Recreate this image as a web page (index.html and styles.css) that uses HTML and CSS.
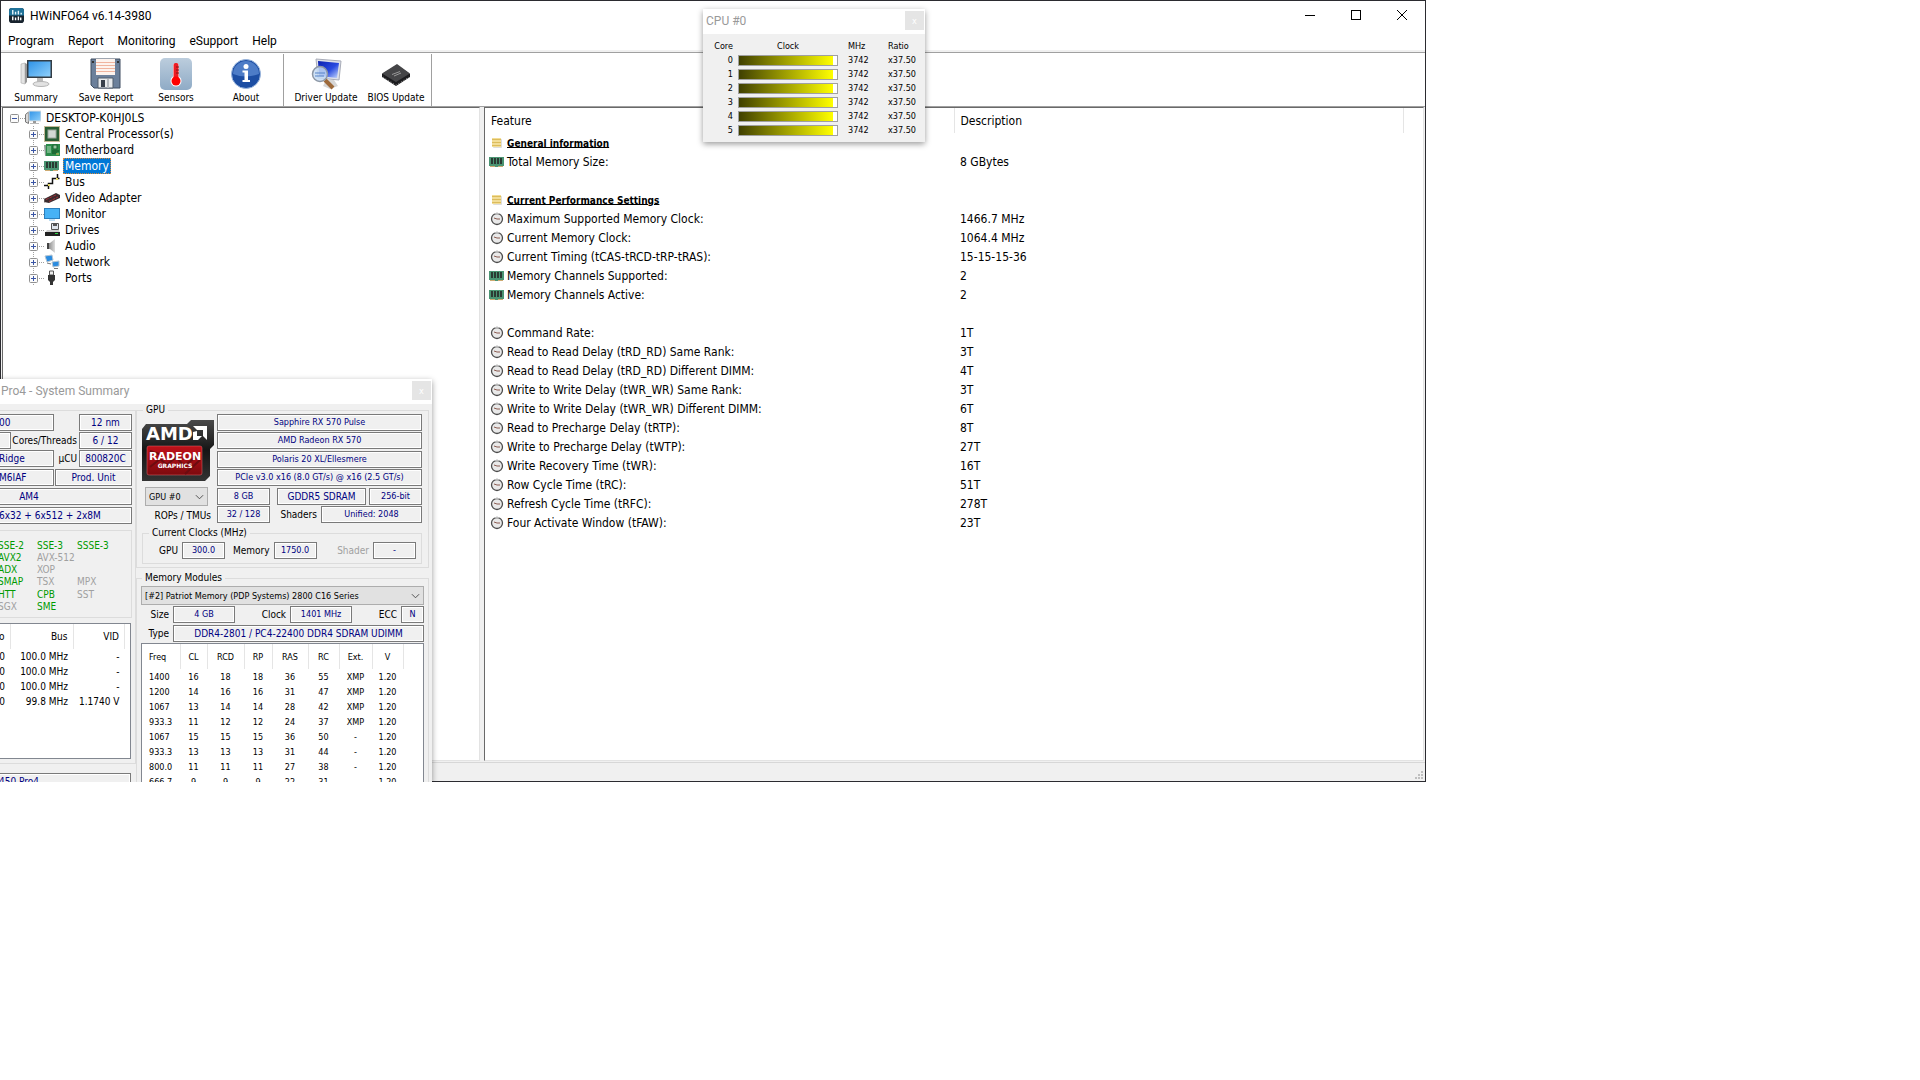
FILE: index.html
```html
<!DOCTYPE html>
<html lang="en">
<head>
    <meta charset="UTF-8">
    <meta name="viewport" content="width=device-width, initial-scale=1.0">
    <title>HWiNFO64 v6.14-3980</title>
    <link rel="stylesheet" href="styles.css">
</head>
<body>
    <svg width="0" height="0" class="sprites" aria-hidden="true">
        <defs>
            <linearGradient id="blue" x1="0" y1="0" x2="1" y2="1">
                <stop offset="0" stop-color="#2f93e8"/>
                <stop offset="1" stop-color="#8fd0fb"/>
            </linearGradient>
            <linearGradient id="steel" x1="0" y1="0" x2="0" y2="1">
                <stop offset="0" stop-color="#bccddd"/>
                <stop offset="1" stop-color="#8fabc6"/>
            </linearGradient>
            <linearGradient id="royal" x1="0" y1="0" x2="1" y2="1">
                <stop offset="0" stop-color="#0a1fae"/>
                <stop offset=".55" stop-color="#2a4be0"/>
                <stop offset="1" stop-color="#c9dcff"/>
            </linearGradient>
            <linearGradient id="grey" x1="0" y1="0" x2="1" y2="0">
                <stop offset="0" stop-color="#777"/>
                <stop offset="1" stop-color="#ddd"/>
            </linearGradient>
            <linearGradient id="red" x1="0" y1="0" x2="0" y2="1">
                <stop offset="0" stop-color="#c01119"/>
                <stop offset="1" stop-color="#7d0a0e"/>
            </linearGradient>
            <linearGradient id="dark" x1="0" y1="0" x2="0" y2="1">
                <stop offset="0" stop-color="#4a4a4a"/>
                <stop offset=".5" stop-color="#151515"/>
                <stop offset="1" stop-color="#333"/>
            </linearGradient>
        </defs>
        <symbol id="i-expand" viewBox="0 0 9 9">
            <rect x=".5" y=".5" width="8" height="8" rx="1" fill="#fbfbfb" stroke="#919191"/>
            <path d="M2 4.5h5M4.5 2v5" stroke="#3a55a5"/>
        </symbol>
        <symbol id="i-collapse" viewBox="0 0 9 9">
            <rect x=".5" y=".5" width="8" height="8" rx="1" fill="#fbfbfb" stroke="#919191"/>
            <path d="M2 4.5h5" stroke="#3a55a5"/>
        </symbol>
        <symbol id="i-pc" viewBox="0 0 16 16">
            <path d="M.5 4.5l3-2.5v11.5l-3-1.5z" fill="#d8d8d8" stroke="#777"/>
            <rect x="4" y="1" width="12" height="10" fill="url(#blue)" stroke="#ddd"/>
            <rect x="8" y="11" width="3" height="2" fill="#999"/>
            <rect x="5" y="13" width="9" height="1" fill="#bbb"/>
        </symbol>
        <symbol id="i-cpu" viewBox="0 0 16 16">
            <rect x=".5" y=".5" width="15" height="15" fill="#fff" stroke="#8b7430" stroke-dasharray="1 1"/>
            <rect x="1" y="1" width="14" height="14" fill="#285c33"/>
            <rect x="4" y="4" width="8" height="8" fill="#d3d8d3" stroke="#9da79d"/>
        </symbol>
        <symbol id="i-board" viewBox="0 0 16 16">
            <path d="M0 3h3v11H1z" fill="#8b9a92"/>
            <rect x="2" y="2" width="14" height="12" fill="#2c8c4b"/>
            <path d="M4 4v7M6 4v7" stroke="#b6dcc0"/>
            <rect x="9" y="3" width="4" height="4" fill="#9bc8a4" stroke="#17612f"/>
            <path d="M8 9h7M8 11h5" stroke="#10491f"/>
            <path d="M12 12h3" stroke="#e2c25c"/>
        </symbol>
        <symbol id="i-ram" viewBox="0 0 16 16">
            <path d="M0 3h15v9H0z" fill="#4a9472"/>
            <path d="M2 4h2v6H2zM5 4h2v6H5zM8 4h2v6H8zM11 4h2v6h-2z" fill="#2b3a33"/>
            <path d="M1 12.5h5M9 12.5h5" stroke="#cdaa72"/>
            <path d="M6 12h3v1H6z" fill="#4a9472"/>
        </symbol>
        <symbol id="i-bus" viewBox="0 0 16 16">
            <path d="M0 11.5h5M4.500 9v6M4.500 10V9.500h4v-5h7M13.500 0v5" fill="none" stroke="#111" stroke-width="1.500"/>
            <path d="M4 10h2v2H4zM12 4h2v2h-2z" fill="#e9dd6a"/>
        </symbol>
        <symbol id="i-gpu" viewBox="0 0 16 16">
            <path d="M0 9l12-6 4 2v3L5 13 0 12z" fill="#3a2c2f"/>
            <path d="M2 9.500l11-5M5 11.500l9-4.500" stroke="#a33038" stroke-dasharray="3 1"/>
            <path d="M0 8v5" stroke="#888"/>
        </symbol>
        <symbol id="i-monitor" viewBox="0 0 16 16">
            <rect x=".5" y="2.5" width="15" height="10" fill="#47b2f5" stroke="#2b7fbd"/>
            <path d="M5 14h6" stroke="#7ebce6"/>
        </symbol>
        <symbol id="i-drive" viewBox="0 0 16 16">
            <path d="M7.500 1.500h7v6h-7z" fill="#dfe5ec" stroke="#555"/>
            <path d="M9 2h4v2H9z" fill="#555"/>
            <path d="M3 8h12l1 3v3H1v-3z" fill="#d0d0d0"/>
            <rect x="1" y="10" width="15" height="4" fill="#222"/>
            <rect x="11" y="11" width="3" height="1" fill="#31d545"/>
        </symbol>
        <symbol id="i-audio" viewBox="0 0 16 16">
            <path d="M3 5h3l5-4v14l-5-4H3z" fill="url(#grey)"/>
            <path d="M4 5v6" stroke="#444" stroke-width="2"/>
        </symbol>
        <symbol id="i-net" viewBox="0 0 16 16">
            <path d="M1 2l7-1 1 5-6 2z" fill="#2b8ce0" stroke="#b6c5d1"/>
            <path d="M8 8l7-1v5l-6 1z" fill="#2b8ce0" stroke="#b6c5d1"/>
            <path d="M3 9l4 1M10 14.500h4" stroke="#777"/>
        </symbol>
        <symbol id="i-port" viewBox="0 0 16 16">
            <path d="M5.500 1h4v4h-4z" fill="#eee" stroke="#555"/>
            <path d="M4 5h7v5l-2 2v3H6v-3l-2-2z" fill="#333"/>
        </symbol>
        <symbol id="i-note" viewBox="0 0 16 16">
            <rect x="4" y="4" width="9" height="9" rx="1" fill="#ddd"/>
            <rect x="3" y="3" width="9" height="9" fill="#f2dd97"/>
            <path d="M3 4.500h9M3 7.500h9M3 10.500h9" stroke="#dcbc5c"/>
        </symbol>
        <symbol id="i-clock" viewBox="0 0 16 16">
            <circle cx="8" cy="8" r="5.500" fill="#e9e9e9" stroke="#4d4d4d" stroke-width="1.300"/>
            <path d="M5 7l3 1h3" fill="none" stroke="#8a5b50"/>
            <path d="M5 2.500h6" stroke="#bbb"/>
        </symbol>
        <symbol id="i-chevron" viewBox="0 0 10 6">
            <path d="M1 1l4 4 4-4" fill="none" stroke="#444"/>
        </symbol>
    </svg>

    <div class="screen">
        <main class="app">
            <header class="titlebar">
                <svg class="app-icon" viewBox="0 0 16 16">
                    <rect width="16" height="16" rx="3" fill="#17232e"/>
                    <path d="M0 8V3a3 3 0 013-3h10a3 3 0 013 3v5z" fill="#1f7299"/>
                    <path d="M4 2v5M7 4v3M10 3v4M13 5v2" stroke="#e6f4fb" stroke-width="1.500"/>
                    <path d="M4 9v4M7 10v3M10 9v4M12.500 10v3" stroke="#fff" stroke-width="1.500"/>
                </svg>
                <h1>HWiNFO64 v6.14-3980</h1>
                <div class="window-buttons">
                    <button aria-label="Minimize"><svg viewBox="0 0 10 10"><path d="M0 5.500h10" stroke="#000"/></svg></button>
                    <button aria-label="Maximize"><svg viewBox="0 0 10 10"><rect x=".5" y=".5" width="9" height="9" fill="none" stroke="#000"/></svg></button>
                    <button aria-label="Close"><svg viewBox="0 0 10 10"><path d="M0 0l10 10M10 0L0 10" stroke="#000"/></svg></button>
                </div>
            </header>

            <nav class="menu">
                <button>Program</button>
                <button>Report</button>
                <button>Monitoring</button>
                <button>eSupport</button>
                <button>Help</button>
            </nav>

            <div class="toolbar">
                <div class="tool-group">
                    <button>
                        <svg viewBox="0 0 32 32">
                            <path d="M1 6l4-1v21l-4-1z" fill="#e4e4e4" stroke="#aaa" stroke-width=".6"/>
                            <path d="M5 5l2 1v18l-2 2z" fill="#999"/>
                            <rect x="7" y="2" width="25" height="18" fill="#333c44"/>
                            <rect x="8.500" y="3.500" width="22" height="15" fill="url(#blue)"/>
                            <path d="M17 20h6v5h-6z" fill="#bbb"/>
                            <ellipse cx="21" cy="26" rx="8" ry="2.500" fill="#e2e2e2" stroke="#b5b5b5"/>
                        </svg>
                        Summary
                    </button>
                    <button>
                        <svg viewBox="0 0 32 32">
                            <path d="M1 1h29v29H4l-3-3z" fill="#6c809b" stroke="#3f4d60"/>
                            <rect x="6" y="1" width="19" height="16" fill="#fdf3ee"/>
                            <path d="M6 4.500h19M6 7.500h19M6 10.500h19M6 13.500h19" stroke="#f0b49f"/>
                            <path d="M8 20h15v10H8z" fill="#e8eaec" stroke="#515d6c"/>
                            <path d="M11 22h4v7h-4z" fill="#38404b"/>
                            <path d="M17 21h2v9h-2z" fill="#b5bac0"/>
                            <path d="M2 3h2v2H2zM27 3h2v2h-2z" fill="#333"/>
                        </svg>
                        Save Report
                    </button>
                    <button>
                        <svg viewBox="0 0 32 32">
                            <rect width="32" height="32" rx="5" fill="url(#steel)"/>
                            <rect x="13" y="5" width="6" height="18" rx="3" fill="#fff"/>
                            <circle cx="16" cy="23" r="5.500" fill="#fff"/>
                            <rect x="13.500" y="5" width="5" height="17" rx="2" fill="#ec1c24"/>
                            <circle cx="16" cy="23" r="4.500" fill="#f00"/>
                            <path d="M16 9h3M16 12h3M16 15h3" stroke="#7e1a1a"/>
                        </svg>
                        Sensors
                    </button>
                    <button>
                        <svg viewBox="0 0 32 32">
                            <circle cx="16" cy="16" r="14.500" fill="#1d4ea3" stroke="#9ab6dd"/>
                            <path d="M3 16a13 13 0 0126 0q-13 5-26 0z" fill="#4d7cc7"/>
                            <circle cx="16" cy="8.500" r="2.500" fill="#fff"/>
                            <path d="M12.500 12.500H18V22h2v2h-7.500v-2h2v-7.500h-2z" fill="#fff"/>
                        </svg>
                        About
                    </button>
                </div>
                <div class="tool-group">
                    <button>
                        <svg viewBox="0 0 32 32">
                            <path d="M6 1l25 2-2 19-21-2z" fill="#dfe2ea" stroke="#a8acb8"/>
                            <path d="M8 3l21 2-2 15-18-2z" fill="url(#royal)"/>
                            <path d="M16 22h8l4 6-8 3-7-3z" fill="#d6d6d6"/>
                            <path d="M15 22l8 8" stroke="#9d6a3b" stroke-width="4"/>
                            <circle cx="10" cy="16" r="7.500" fill="#c5dcf5" fill-opacity=".85" stroke="#8d97a5" stroke-width="1.500"/>
                            <path d="M5 15h10M5 18h9" stroke="#5783c8"/>
                        </svg>
                        Driver Update
                    </button>
                    <button>
                        <svg viewBox="0 0 32 32">
                            <path d="M2 16l15-9 13 9v3l-14 9-14-9z" fill="#1c1c1e"/>
                            <path d="M2 15.500L17 6l13 9.500-14 8.500z" fill="#454547"/>
                            <path d="M3 19l13 8 13-8" fill="none" stroke="#8a8a8a" stroke-dasharray="1 2"/>
                            <path d="M12 16.500l8-3M14 18l7-3" stroke="#999"/>
                        </svg>
                        BIOS Update
                    </button>
                </div>
            </div>

            <div class="panes">
                <section class="tree">
                    <ul>
                        <li class="root"><svg class="box"><use href="#i-collapse"/></svg><svg class="icon"><use href="#i-pc"/></svg><span>DESKTOP-K0HJ0LS</span></li>
                        <li><svg class="box"><use href="#i-expand"/></svg><svg class="icon"><use href="#i-cpu"/></svg><span>Central Processor(s)</span></li>
                        <li><svg class="box"><use href="#i-expand"/></svg><svg class="icon"><use href="#i-board"/></svg><span>Motherboard</span></li>
                        <li><svg class="box"><use href="#i-expand"/></svg><svg class="icon"><use href="#i-ram"/></svg><span class="selected">Memory</span></li>
                        <li><svg class="box"><use href="#i-expand"/></svg><svg class="icon"><use href="#i-bus"/></svg><span>Bus</span></li>
                        <li><svg class="box"><use href="#i-expand"/></svg><svg class="icon"><use href="#i-gpu"/></svg><span>Video Adapter</span></li>
                        <li><svg class="box"><use href="#i-expand"/></svg><svg class="icon"><use href="#i-monitor"/></svg><span>Monitor</span></li>
                        <li><svg class="box"><use href="#i-expand"/></svg><svg class="icon"><use href="#i-drive"/></svg><span>Drives</span></li>
                        <li><svg class="box"><use href="#i-expand"/></svg><svg class="icon"><use href="#i-audio"/></svg><span>Audio</span></li>
                        <li><svg class="box"><use href="#i-expand"/></svg><svg class="icon"><use href="#i-net"/></svg><span>Network</span></li>
                        <li><svg class="box"><use href="#i-expand"/></svg><svg class="icon"><use href="#i-port"/></svg><span>Ports</span></li>
                    </ul>
                </section>

                <section class="details">
                    <table>
                        <colgroup><col class="col-feature"><col class="col-desc"><col></colgroup>
                        <thead>
                            <tr><th>Feature</th><th>Description</th><th></th></tr>
                        </thead>
                        <tbody>
                            <tr class="section"><td><svg class="icon"><use href="#i-note"/></svg><b>General information</b></td><td></td></tr>
                            <tr><td><svg class="icon"><use href="#i-ram"/></svg>Total Memory Size:</td><td>8 GBytes</td></tr>
                            <tr><td></td><td></td></tr>
                            <tr class="section"><td><svg class="icon"><use href="#i-note"/></svg><b>Current Performance Settings</b></td><td></td></tr>
                            <tr><td><svg class="icon"><use href="#i-clock"/></svg>Maximum Supported Memory Clock:</td><td>1466.7 MHz</td></tr>
                            <tr><td><svg class="icon"><use href="#i-clock"/></svg>Current Memory Clock:</td><td>1064.4 MHz</td></tr>
                            <tr><td><svg class="icon"><use href="#i-clock"/></svg>Current Timing (tCAS-tRCD-tRP-tRAS):</td><td>15-15-15-36</td></tr>
                            <tr><td><svg class="icon"><use href="#i-ram"/></svg>Memory Channels Supported:</td><td>2</td></tr>
                            <tr><td><svg class="icon"><use href="#i-ram"/></svg>Memory Channels Active:</td><td>2</td></tr>
                            <tr><td></td><td></td></tr>
                            <tr><td><svg class="icon"><use href="#i-clock"/></svg>Command Rate:</td><td>1T</td></tr>
                            <tr><td><svg class="icon"><use href="#i-clock"/></svg>Read to Read Delay (tRD_RD) Same Rank:</td><td>3T</td></tr>
                            <tr><td><svg class="icon"><use href="#i-clock"/></svg>Read to Read Delay (tRD_RD) Different DIMM:</td><td>4T</td></tr>
                            <tr><td><svg class="icon"><use href="#i-clock"/></svg>Write to Write Delay (tWR_WR) Same Rank:</td><td>3T</td></tr>
                            <tr><td><svg class="icon"><use href="#i-clock"/></svg>Write to Write Delay (tWR_WR) Different DIMM:</td><td>6T</td></tr>
                            <tr><td><svg class="icon"><use href="#i-clock"/></svg>Read to Precharge Delay (tRTP):</td><td>8T</td></tr>
                            <tr><td><svg class="icon"><use href="#i-clock"/></svg>Write to Precharge Delay (tWTP):</td><td>27T</td></tr>
                            <tr><td><svg class="icon"><use href="#i-clock"/></svg>Write Recovery Time (tWR):</td><td>16T</td></tr>
                            <tr><td><svg class="icon"><use href="#i-clock"/></svg>Row Cycle Time (tRC):</td><td>51T</td></tr>
                            <tr><td><svg class="icon"><use href="#i-clock"/></svg>Refresh Cycle Time (tRFC):</td><td>278T</td></tr>
                            <tr><td><svg class="icon"><use href="#i-clock"/></svg>Four Activate Window (tFAW):</td><td>23T</td></tr>
                        </tbody>
                    </table>
                </section>
            </div>

            <footer class="statusbar">
                <svg viewBox="0 0 8 8"><path d="M6 0h2v2H6zM3 3h2v2H3zM6 3h2v2H6zM0 6h2v2H0zM3 6h2v2H3zM6 6h2v2H6z" fill="#bfbfbf"/></svg>
            </footer>
        </main>

        <!-- CPU clocks -->
        <section class="float cpu-window">
            <header class="float-title"><h2>CPU #0</h2><button aria-label="Close">x</button></header>
            <table class="cores">
                <thead><tr><th>Core</th><th>Clock</th><th>MHz</th><th>Ratio</th></tr></thead>
                <tbody>
                    <tr><td>0</td><td><div class="meter"><div></div></div></td><td>3742</td><td>x37.50</td></tr>
                    <tr><td>1</td><td><div class="meter"><div></div></div></td><td>3742</td><td>x37.50</td></tr>
                    <tr><td>2</td><td><div class="meter"><div></div></div></td><td>3742</td><td>x37.50</td></tr>
                    <tr><td>3</td><td><div class="meter"><div></div></div></td><td>3742</td><td>x37.50</td></tr>
                    <tr><td>4</td><td><div class="meter"><div></div></div></td><td>3742</td><td>x37.50</td></tr>
                    <tr><td>5</td><td><div class="meter"><div></div></div></td><td>3742</td><td>x37.50</td></tr>
                </tbody>
            </table>
        </section>

        <!-- System summary -->
        <section class="float summary-window">
            <header class="float-title"><h2>Pro4 - System Summary</h2><button aria-label="Close">x</button></header>
            <div class="summary-body">
                <div class="cpu-column">
                    <fieldset class="cpu-group">
                        <div class="row"><output class="field clipped w-name">00</output><output class="field push w-small">12 nm</output></div>
                        <div class="row"><output class="field clipped w-tiny"></output><span class="label push">Cores/Threads</span><output class="field w-small">6 / 12</output></div>
                        <div class="row"><output class="field clipped w-name">Ridge</output><span class="label push">µCU</span><output class="field w-small">800820C</output></div>
                        <div class="row spaced"><output class="field clipped w-name">M6IAF</output><output class="field push grow">Prod. Unit</output></div>
                        <div class="row spaced"><output class="field socket grow">AM4</output></div>
                        <div class="row spaced"><output class="field clipped grow">6x32 + 6x512 + 2x8M</output></div>
                        <div class="features">
                            <span class="on">SSE-2</span><span class="on">SSE-3</span><span class="on">SSSE-3</span>
                            <span class="on">AVX2</span><span>AVX-512</span><span></span>
                            <span class="on">ADX</span><span>XOP</span><span></span>
                            <span class="on">SMAP</span><span>TSX</span><span>MPX</span>
                            <span class="on">HTT</span><span class="on">CPB</span><span>SST</span>
                            <span>SGX</span><span class="on">SME</span><span></span>
                        </div>
                        <div class="list bus-list">
                            <table>
                                <thead><tr><th>o</th><th>Bus</th><th>VID</th></tr></thead>
                                <tbody>
                                    <tr><td>0</td><td>100.0 MHz</td><td>-</td></tr>
                                    <tr><td>0</td><td>100.0 MHz</td><td>-</td></tr>
                                    <tr><td>0</td><td>100.0 MHz</td><td>-</td></tr>
                                    <tr><td>0</td><td>99.8 MHz</td><td>1.1740 V</td></tr>
                                </tbody>
                            </table>
                        </div>
                    </fieldset>
                    <div class="board-group"><output class="field clipped grow">450 Pro4</output></div>
                </div>

                <div class="gpu-column">
                    <fieldset class="gpu-group">
                        <legend>GPU</legend>
                        <div class="gpu-main">
                            <div class="gpu-side">
                                <svg class="logo" viewBox="0 0 72 61">
                                    <path d="M0 9l4-5h41l4-4h23v25l-4 4v27l-5 5H0z" fill="url(#dark)"/>
                                    <rect x="5" y="26" width="55" height="29" rx="2" fill="url(#red)" stroke="#e6696e" stroke-width=".5"/>
                                    <path d="M8 47l10-8 7 6 9-8 8 9 16-12M8 31l9 3M43 54l15-14" stroke="#6c0c10" stroke-width="2" fill="none"/>
                                    <text x="4" y="20" class="logo-amd">AMD</text>
                                    <path d="M51 6h14v14l-4-4v-6h-6zM51 12l4-1v5h5l-4 4h-5z" fill="#fff"/>
                                    <text x="33" y="40" class="logo-radeon">RADEON</text>
                                    <text x="33" y="48" class="logo-graphics">GRAPHICS</text>
                                </svg>
                                <div class="select gpu-select">
                                    <select aria-label="GPU"><option>GPU #0</option></select>
                                    <svg><use href="#i-chevron"/></svg>
                                </div>
                                <span class="label rops">ROPs / TMUs</span>
                            </div>
                            <div class="gpu-fields">
                                <div class="row"><output class="field grow">Sapphire RX 570 Pulse</output></div>
                                <div class="row"><output class="field grow">AMD Radeon RX 570</output></div>
                                <div class="row spaced"><output class="field grow">Polaris 20 XL/Ellesmere</output></div>
                                <div class="row"><output class="field grow">PCIe v3.0 x16 (8.0 GT/s) @ x16 (2.5 GT/s)</output></div>
                                <div class="row spaced"><output class="field w-small">8 GB</output><output class="field push w-type">GDDR5 SDRAM</output><output class="field after w-small">256-bit</output></div>
                                <div class="row"><output class="field w-small">32 / 128</output><span class="label push">Shaders</span><output class="field w-shaders">Unified: 2048</output></div>
                            </div>
                        </div>
                        <fieldset class="clocks-group">
                            <legend>Current Clocks (MHz)</legend>
                            <div class="row">
                                <span class="label w-label">GPU</span><output class="field w-clock">300.0</output>
                                <span class="label next">Memory</span><output class="field w-clock">1750.0</output>
                                <span class="label push off">Shader</span><output class="field w-clock">-</output>
                            </div>
                        </fieldset>
                    </fieldset>

                    <fieldset class="memory-group">
                        <legend>Memory Modules</legend>
                        <div class="select">
                            <select aria-label="Memory module"><option>[#2] Patriot Memory (PDP Systems) 2800 C16 Series</option></select>
                            <svg><use href="#i-chevron"/></svg>
                        </div>
                        <div class="row">
                            <span class="label w-label">Size</span><output class="field w-size">4 GB</output>
                            <span class="label push">Clock</span><output class="field w-size">1401 MHz</output>
                            <span class="label push">ECC</span><output class="field w-ecc">N</output>
                        </div>
                        <div class="row spaced">
                            <span class="label w-label">Type</span><output class="field grow">DDR4-2801 / PC4-22400 DDR4 SDRAM UDIMM</output>
                        </div>
                        <div class="list timing-list">
                            <table>
                                <colgroup><col class="c1"><col class="c2"><col class="c3"><col class="c4"><col class="c5"><col class="c6"><col class="c7"><col class="c8"><col></colgroup>
                                <thead><tr><th>Freq</th><th>CL</th><th>RCD</th><th>RP</th><th>RAS</th><th>RC</th><th>Ext.</th><th>V</th></tr></thead>
                                <tbody>
                                    <tr><td>1400</td><td>16</td><td>18</td><td>18</td><td>36</td><td>55</td><td>XMP</td><td>1.20</td></tr>
                                    <tr><td>1200</td><td>14</td><td>16</td><td>16</td><td>31</td><td>47</td><td>XMP</td><td>1.20</td></tr>
                                    <tr><td>1067</td><td>13</td><td>14</td><td>14</td><td>28</td><td>42</td><td>XMP</td><td>1.20</td></tr>
                                    <tr><td>933.3</td><td>11</td><td>12</td><td>12</td><td>24</td><td>37</td><td>XMP</td><td>1.20</td></tr>
                                    <tr><td>1067</td><td>15</td><td>15</td><td>15</td><td>36</td><td>50</td><td>-</td><td>1.20</td></tr>
                                    <tr><td>933.3</td><td>13</td><td>13</td><td>13</td><td>31</td><td>44</td><td>-</td><td>1.20</td></tr>
                                    <tr><td>800.0</td><td>11</td><td>11</td><td>11</td><td>27</td><td>38</td><td>-</td><td>1.20</td></tr>
                                    <tr><td>666.7</td><td>9</td><td>9</td><td>9</td><td>22</td><td>31</td><td>-</td><td>1.20</td></tr>
                                </tbody>
                            </table>
                        </div>
                    </fieldset>
                </div>
            </div>
        </section>
    </div>
</body>
</html>
```
FILE: styles.css
```css
:root {
    --face: #f0f0f0;
    --line: #a0a0a0;
    --group-line: #dcdcdc;
    --field-line: #7a7a7a;
    --value: #000080;
    --feature-on: #009a00;
    --muted: #a0a0a0;
    --selected: #0078d7;
}

* {
    box-sizing: border-box;
}

body {
    margin: 0;
    background-color: #fff;
    color: #000;
    font-family: 'DejaVu Sans Condensed', 'DejaVu Sans', Tahoma, sans-serif;
    font-size: 12px;
}

.sprites {
    position: absolute;
}

h1, h2 {
    margin: 0;
    font-family: Roboto, 'Noto Sans', sans-serif;
    font-size: 12px;
    font-weight: normal;
}

button {
    border: none;
    padding: 0;
    background: none;
    color: inherit;
    font: inherit;
}

table {
    border-collapse: collapse;
    table-layout: fixed;
    width: 100%;
}

th, td {
    padding: 0;
    font-weight: normal;
    text-align: left;
    white-space: nowrap;
}

/* main window */
.screen {
    position: relative;
    width: 74.25vw;
    height: 72.4vh;
    overflow: hidden;
}

.app {
    display: flex;
    flex-direction: column;
    height: 100%;
    border: 1px solid #2b2b30;
    background-color: #fff;
}

.titlebar {
    display: flex;
    align-items: center;
    height: 29px;
    padding-left: 8px;
}

.app-icon {
    width: 15px;
    height: 15px;
    margin-right: 6px;
}

.window-buttons {
    display: flex;
    margin-left: auto;
}

.window-buttons button {
    width: 46px;
    height: 29px;
}

.window-buttons svg {
    width: 10px;
    height: 10px;
}

.menu {
    display: flex;
    gap: 14px;
    height: 23px;
    padding: 0 7px;
    border-bottom: 1px solid var(--line);
    box-shadow: inset 0 -2px 0 #f0f0f0;
    font-family: Roboto, 'Noto Sans', sans-serif;
}

.toolbar {
    display: flex;
    height: 54px;
    padding-top: 1px;
    border-bottom: 1px solid var(--line);
}

.tool-group {
    display: flex;
    border-right: 1px solid var(--line);
}

.tool-group + .tool-group {
    padding-left: 7px;
}

.tool-group:first-child {
    padding-right: 2px;
}

.toolbar button {
    display: flex;
    flex-direction: column;
    align-items: center;
    gap: 2px;
    width: 70px;
    padding-top: 4px;
    font-size: 10px;
    line-height: 12px;
    white-space: nowrap;
}

.toolbar svg {
    width: 32px;
    height: 32px;
}

.panes {
    display: flex;
    flex: 1;
    gap: 4px;
    min-height: 0;
    padding: 0 1px 1px;
    background-color: var(--face);
}

.tree, .details {
    border: 1px solid #e3e3e3;
    border-top-color: #696969;
    border-left-color: #696969;
    background-color: #fff;
}

.tree {
    width: 478px;
}

.details {
    flex: 1;
}

.tree ul {
    margin: 0;
    padding: 2px 0 0 26px;
    list-style: none;
}

.tree li {
    display: flex;
    align-items: center;
    height: 16px;
    /* dotted connectors between the boxes */
    background: repeating-linear-gradient(#a0a0a0 0 1px, transparent 1px 2px) 4px 0 / 1px 100% no-repeat,
                repeating-linear-gradient(90deg, #a0a0a0 0 1px, transparent 1px 2px) 10px 8px / 6px 1px no-repeat;
}

.tree .root {
    margin-left: -19px;
    background: repeating-linear-gradient(90deg, #a0a0a0 0 1px, transparent 1px 2px) 10px 8px / 6px 1px no-repeat;
}

.tree .box {
    width: 9px;
    height: 9px;
    margin-right: 6px;
}

.icon {
    width: 16px;
    height: 16px;
}

.tree span {
    padding: 0 2px;
    margin-left: 3px;
    line-height: 16px;
}

.tree .selected {
    outline: 1px dotted #d68a3a;
    outline-offset: -1px;
    background-color: var(--selected);
    color: #fff;
}

.details .col-feature {
    width: 469px;
}

.details .col-desc {
    width: 449px;
}

.details th {
    height: 25px;
    padding-left: 6px;
    border-right: 1px solid #e5e5e5;
}

.details th:last-child {
    border-right: none;
}

.details td {
    height: 19px;
    padding-left: 6px;
}

.details td:first-child {
    padding-left: 4px;
}

.details .icon {
    margin-right: 2px;
    vertical-align: middle;
}

.section b {
    font-size: 10px;
    text-decoration: underline;
}

.statusbar {
    display: flex;
    align-items: flex-end;
    justify-content: flex-end;
    height: 19px;
    padding: 2px;
    border-top: 1px solid #d7d7d7;
    background-color: var(--face);
}

.statusbar svg {
    width: 8px;
    height: 8px;
}

/* floating windows */
.float {
    position: absolute;
    background-color: var(--face);
    box-shadow: 0 2px 6px rgba(0, 0, 0, 0.4);
    font-size: 9px;
}

.float-title {
    display: flex;
    align-items: center;
    justify-content: space-between;
    height: 25px;
    padding: 0 1px 2px 3px;
    background-color: #fff;
    color: #999;
}

.float-title button {
    width: 19px;
    height: 19px;
    background-color: #e5e5e5;
    color: #fff;
}

.cpu-window {
    top: 9px;
    left: 703px;
    width: 222px;
    height: 133px;
}

.cores {
    margin-top: 5px;
}

.cores th, .cores td {
    height: 14px;
}

.cores th:nth-child(1), .cores td:nth-child(1) {
    width: 30px;
    text-align: right;
}

.cores th:nth-child(2), .cores td:nth-child(2) {
    width: 115px;
    padding: 0 10px 0 5px;
    text-align: center;
}

.cores th:nth-child(3) {
    width: 40px;
}

.meter {
    height: 11px;
    padding-right: 4px;
    border: 1px solid var(--line);
    background-color: #fff;
}

.meter div {
    height: 100%;
    background: linear-gradient(90deg, #404000, #ffff00);
}

/* hangs over the left edge of the screen */
.summary-window {
    top: 379px;
    bottom: 0;
    left: -4px;
    width: 436px;
}

.summary-window .float-title {
    padding-left: 5px;
}

.summary-body {
    display: flex;
    height: calc(100% - 25px);
    overflow: hidden;
}

.cpu-column {
    width: 140px;
    font-size: 10px;
}

.gpu-column {
    width: 293px;
}

fieldset {
    min-width: 0;
    margin: 0;
    padding: 0;
    border: 1px solid var(--group-line);
}

legend {
    margin-left: 1px;
    padding: 0 3px;
    font-size: 10px;
    line-height: 8px;
}

.row {
    display: flex;
    align-items: center;
    margin-top: 1px;
}

.row:first-child {
    margin-top: 0;
}

.spaced {
    margin-top: 2px;
}

.label {
    padding-right: 4px;
    font-size: 10px;
    line-height: 12px;
    white-space: nowrap;
}

.cpu-column .label {
    padding-right: 2px;
}

.push {
    margin-left: auto;
}

.next {
    margin-left: 8px;
}

.grow {
    flex: 1;
}

.row .grow.push {
    margin-left: 1px;
}

.after {
    margin-left: 3px;
}

.off {
    color: var(--muted);
}

.field {
    height: 17px;
    border: 1px solid var(--field-line);
    box-shadow: inset 0 0 0 1px #fff;
    color: var(--value);
    line-height: 15px;
    text-align: center;
    white-space: nowrap;
}

.field.clipped {
    padding-left: 3px;
    border-left: none;
    text-align: left;
}

.field.socket {
    padding-right: 70px;
}

.w-name { width: 58px; }
.w-small { width: 53px; }
.w-tiny { width: 15px; }
.w-type { width: 89px; font-size: 10px; }
.w-shaders { width: 101px; }
.w-clock { width: 43px; }
.w-size { width: 62px; }
.w-ecc { width: 23px; }

.w-label {
    width: 32px;
    text-align: right;
}

.cpu-group {
    margin-top: 6px;
    padding: 3px 3px 4px 0;
    border-left: none;
}

.features {
    display: grid;
    grid-template-columns: 39px 40px 1fr;
    height: 88px;
    margin-top: 6px;
    padding: 9px 0 4px 2px;
    border: 1px solid var(--group-line);
    border-left: none;
    color: var(--muted);
}

.features span {
    line-height: 12px;
}

.features .on {
    color: var(--feature-on);
}

.list {
    border: 1px solid #828790;
    background-color: #fff;
}

.list th {
    height: 25px;
    border-right: 1px solid #e5e5e5;
}

.list td {
    height: 15px;
}

.bus-list {
    height: 136px;
    margin: 5px 1px 0 0;
    padding-right: 5px;
    border-left: none;
}

.bus-list th, .bus-list td {
    padding-right: 5px;
    text-align: right;
}

.bus-list th:nth-child(1) { width: 14px; }
.bus-list th:nth-child(2) { width: 63px; }

.board-group {
    display: flex;
    padding: 9px 5px 0 0;
}

.gpu-group {
    margin-top: 2px;
    padding: 0 6px 3px 5px;
}

.gpu-main {
    display: flex;
}

.gpu-side {
    display: flex;
    flex-direction: column;
    width: 75px;
}

.gpu-fields {
    flex: 1;
}

.logo {
    width: 72px;
    height: 61px;
    margin: 6px 0;
}

.logo text {
    fill: #fff;
    font-family: 'DejaVu Sans', sans-serif;
    font-weight: bold;
}

.logo-amd {
    font-size: 18px;
}

.logo .logo-radeon {
    font-size: 11px;
    text-anchor: middle;
}

.logo .logo-graphics {
    font-size: 6px;
    text-anchor: middle;
}

.select {
    position: relative;
    height: 19px;
}

.select select {
    width: 100%;
    height: 100%;
    padding: 0 3px;
    border: 1px solid #adadad;
    border-radius: 0;
    background-color: #e1e1e1;
    color: #000;
    font: inherit;
    appearance: none;
}

.select svg {
    position: absolute;
    top: 7px;
    right: 4px;
    width: 9px;
    height: 6px;
    pointer-events: none;
}

.gpu-select {
    width: 63px;
    margin-left: 3px;
}

.rops {
    margin-top: 4px;
    padding-right: 6px;
    text-align: right;
}

.clocks-group {
    margin-top: 6px;
    padding: 4px 5px;
}

.clocks-group .w-label {
    width: 34px;
}

.memory-group {
    margin-top: 6px;
    padding: 4px 4px 0;
}

.timing-list {
    height: 260px;
    margin-top: 1px;
}

.timing-list th, .timing-list td {
    text-align: center;
}

.timing-list th:first-child, .timing-list td:first-child {
    padding-left: 7px;
    text-align: left;
}

.memory-group .row .grow {
    font-size: 10px;
}

.c1 { width: 38px; }
.c2 { width: 27px; }
.c3 { width: 37px; }
.c4 { width: 28px; }
.c5 { width: 36px; }
.c6 { width: 31px; }
.c7 { width: 33px; }
.c8 { width: 31px; }
```
